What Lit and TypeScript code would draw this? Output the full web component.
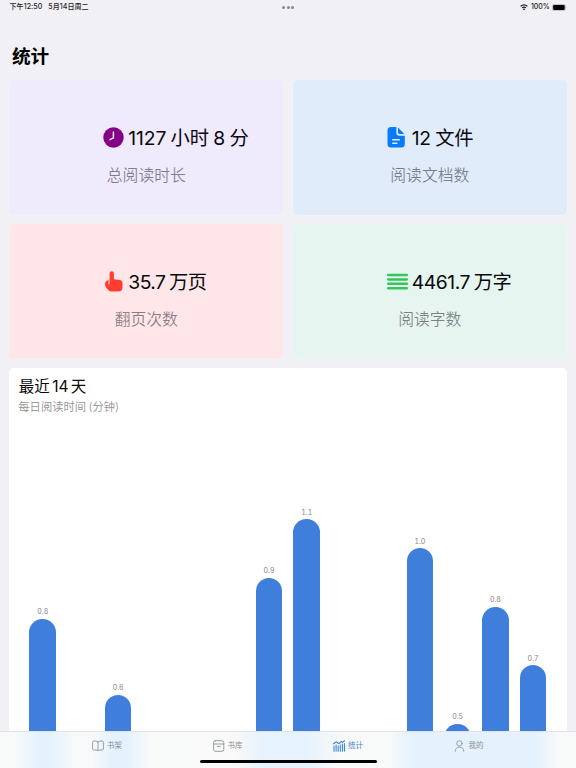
import { LitElement, html, css, svg } from "lit";
import { customElement, property } from "lit/decorators.js";

const icons = {
  clock: svg`<circle cx="10.5" cy="10.5" r="10.2" fill="#860087"/><path d="M10.4 4.9v6L7 12.7" fill="none" stroke="#f0eafc" stroke-width="1.5" stroke-linecap="round" stroke-linejoin="round"/>`,
  file: svg`<path d="M4 0H9.4V6Q9.4 8.8 12.2 8.8H17.8V17Q17.8 20.6 14.2 20.6H4Q.5 20.6 .5 17V3.6Q.5 0 4 0Z" fill="#087bfb"/><path d="M11 .4 17.3 6.9H12.6Q11 6.9 11 5.3Z" fill="#087bfb"/><path d="M5.7 12.7h6.6M5.7 16.3h4.2" stroke="#e1ecfb" stroke-width="1.4" stroke-linecap="round"/>`,
  finger: svg`<path transform="translate(1.4 0)" d="M5.2 2.3a2.15 2.15 0 0 1 4.3 0V8.2L15.7 9.1Q18.1 9.5 18.1 12V16Q18.1 20.6 13.5 20.6H7.5Q5.2 20.6 3.8 19L1.4 16Q.3 14.3.7 12.3 1 9.6 3.6 8.9L5.2 8.5Z" fill="#fe3c32"/><path d="M6 8.9v4.2" stroke="#ffe7e8" stroke-width="1" stroke-linecap="round"/>`,
  lines: svg`<path d="M1.2 4h18.6M1.2 8.4h18.6M1.2 12.8h18.6M1.2 17.2h18.6" stroke="#35c75b" stroke-width="2.5" stroke-linecap="round"/>`,
  book: svg`<path d="M6 2.1Q5.2 1 3.7 1H1.8Q.6 1 .6 2.2V8.9Q.6 10 1.8 10H4Q5.3 10 6 10.8 6.7 10 8 10h2.2q1.2 0 1.2-1.1V2.2Q11.4 1 10.2 1H8.3Q6.8 1 6 2.1ZM6 2.1v8.6"/>`,
  box: svg`<rect x=".6" y=".7" width="10.2" height="10.6" rx="1.8"/><path d="M.6 4h10.2M4.2 6.4h3"/>`,
  stats: svg`<path d="M1 11.2V6.1M3.1 11.2V5M5.2 11.2V6M7.3 11.2V5M9.4 11.2V4M11.4 11.2V3.6"/><path d="M.6 3.8 3.3 1.7 6 3.7 8.5 1.5 9.6 2.4 11.6.8"/>`,
  person: svg`<circle cx="5.5" cy="3.4" r="2.7"/><path d="M1.2 11.3C1.2 8.7 2.8 7.2 5.5 7.2s4.3 1.5 4.3 4.1"/>`,
};

const text = css`
  :host { font-family: Inter, "Noto Sans CJK SC", sans-serif; }
`;

@customElement("stat-card")
class StatCard extends LitElement {
  @property() icon = "clock";
  @property() label = "";
  static styles = [text, css`
    :host { display: flex; flex-direction: column; border-radius: 5px; box-shadow: 0 0 5px #ffffff40; }
    .value { display: flex; align-items: center; gap: 4px; height: 28px; margin: 43px 0 0 94px; }
    svg { width: 21px; height: 21px; flex: none; }
    .number { padding-top: 1.6px; font-size: 19.3px; line-height: 28px; white-space: nowrap; color: #08080c; font-weight: 370; letter-spacing: var(--tracking, -.3px); word-spacing: var(--word-gap, -.7px); }
    .label { margin-top: 13px; text-align: center; font-size: 15.8px; line-height: 24px; font-weight: 350; color: #12121c80; }
  `];
  render() {
    return html`
      <div class="value"><svg viewBox="0 0 21 21">${icons[this.icon as keyof typeof icons]}</svg><span class="number"><slot></slot></span></div>
      <div class="label">${this.label}</div>`;
  }
}

@customElement("day-chart")
class DayChart extends LitElement {
  static styles = [text, css`
    :host { display: flex; flex-direction: column; background: #fff; border-radius: 5px 5px 0 0; overflow: hidden; }
    .title { margin: 7px 0 0 9.5px; font-size: 15.5px; line-height: 23px; color: #0b0b0b; word-spacing: -2px; }
    .sub { margin: 1px 0 0 9px; font-size: 11.3px; line-height: 16px; color: #929292; font-weight: 350; white-space: pre; word-spacing: -.8px; }
    .bars { flex: 1; display: grid; grid-template-columns: repeat(14, 37.73px); margin-left: 14.6px; align-items: end; }
    .day { display: flex; flex-direction: column; align-items: center; }
    .num { font-size: 7px; line-height: 10px; height: 11.5px; color: #858585; font-feature-settings: "tnum"; }
    .clip { width: 27px; overflow: hidden; }
    .bar { width: 26.6px; height: 300px; margin: 0 auto; border-radius: 13.3px; background: #407edc; }
  `];
  render() {
    const days: [string, number][] = [
      ["0.8", 112], ["", 0], ["0.6", 36], ["", 0], ["", 0], ["", 0], ["0.9", 153],
      ["1.1", 211.5], ["", 0], ["", 0], ["1.0", 182.5], ["0.5", 7], ["0.8", 124], ["0.7", 65.5],
    ];
    return html`
      <div class="title">最近 14 天</div>
      <div class="sub">每日阅读时间 (分钟)</div>
      <div class="bars">${days.map(([n, h]) => html`<div class="day">${n ? html`
        <span class="num">${n}</span><div class="clip" style="height:${h}px"><div class="bar"></div></div>` : ""}</div>`)}</div>`;
  }
}

@customElement("app-root")
class AppRoot extends LitElement {
  static styles = [text, css`
    :host { display: flex; flex-direction: column; width: 576px; height: 768px; overflow: hidden; background: #f1f0f5; color: #000; }
    .status { display: flex; align-items: center; justify-content: space-between; height: 14px; padding: 0 9px 0 9.5px; font-size: 7px; line-height: 14px; font-weight: 500; color: #222; }
    .status > * { flex: 1; display: flex; align-items: center; }
    .when { gap: 6px; letter-spacing: .08px; }
    .dots { justify-content: center; gap: 1.6px; }
    .dots i { width: 3px; height: 3px; border-radius: 50%; background: #89898d; }
    .power { justify-content: flex-end; gap: 2.5px; letter-spacing: -.1px; }
    .wifi { width: 8px; height: 7px; }
    .battery { width: 15px; height: 7px; }
    h1 { margin: 28px 0 0 12px; height: 38px; font-size: 18.6px; line-height: 29px; font-weight: 600; }
    .cards { display: grid; grid-template: 134.5px 134.5px / 274px 274px; gap: 9.5px; padding: 0 9.3px; }
    .purple { background: #efeafc; --tracking: -.1px; --word-gap: -1px; }
    .blue { background: #e1ecfb; }
    .red { background: #ffe6e8; --tracking: -.55px; --word-gap: -1.3px; }
    .green { background: #e6f5f0; --tracking: -.45px; --word-gap: -1.3px; }
    day-chart { flex: 1; margin: 9.5px 9.3px 0; }
    .tabs { height: 36.4px; border-top: 1px solid #dfe4e8; display: flex; flex-direction: column; align-items: center;
      background: linear-gradient(90deg, #f8f9f9 15px, #eef6fb 27px, #e4f2fd 37px, #e4f2fd 50px, #f0f7fb 65px, #f8f9f9 75px, #f7f9fa 93px, #e4f2fd 112px, #e4f2fd 126px, #f8f9f9 150px, #f9f9f9 235px, #e6f2fd 264px, #e6f2fd 305px, #f8f9f9 341px, #f8f9f9 390px, #e5f2fd 412px, #e5f2fd 535px, #f8f9f9 558px); }
    .items { display: grid; grid-template-columns: repeat(4, 120.5px); height: 28.8px; margin-left: -.5px; }
    .tab { display: flex; align-items: center; justify-content: center; gap: 3px; font-size: 7.5px; line-height: 12px; color: #8b9095; }
    .tab svg { width: 12px; height: 12px; fill: none; stroke: currentColor; stroke-width: .85; stroke-linejoin: round; stroke-linecap: round; }
    .tab.active { color: #3d88d1; }
    .tab.active svg { stroke-width: 1.1; }
    .home { width: 177px; height: 3px; border-radius: 2px; background: #000; }
  `];
  render() {
    return html`
      <div class="status">
        <div class="when"><span>下午12:50</span><span>5月14日周二</span></div>
        <div class="dots"><i></i><i></i><i></i></div>
        <div class="power">
          <svg class="wifi" viewBox="0 0 8 7"><path d="M.6 2.3Q4-.5 7.4 2.3M2 3.9Q4 2.3 6 3.9" fill="none" stroke="#222" stroke-width="1.2"/><path d="M2.8 5 4 6.4 5.2 5Q4 4 2.8 5Z" fill="#222"/></svg>
          <span>100%</span>
          <svg class="battery" viewBox="0 0 15 7"><rect x=".4" y=".4" width="13" height="6.2" rx="1.8" fill="none" stroke="#9b9b9f" stroke-width=".6"/><rect x="1.1" y="1.1" width="11.6" height="4.8" rx="1.2"/><path d="M14.1 2.4v2.2q.8-1.1 0-2.2" fill="#89898d"/></svg>
        </div>
      </div>
      <h1>统计</h1>
      <div class="cards">
        <stat-card class="purple" icon="clock" label="总阅读时长">1127 小时 8 分</stat-card>
        <stat-card class="blue" icon="file" label="阅读文档数">12 文件</stat-card>
        <stat-card class="red" icon="finger" label="翻页次数">35.7 万页</stat-card>
        <stat-card class="green" icon="lines" label="阅读字数">4461.7 万字</stat-card>
      </div>
      <day-chart></day-chart>
      <div class="tabs">
        <div class="items">
          ${[["book", "书架"], ["box", "书库"], ["stats", "统计"], ["person", "我的"]].map(([icon, name]) => html`
            <div class="tab ${icon === "stats" ? "active" : ""}"><svg viewBox="0 0 12 12">${icons[icon as keyof typeof icons]}</svg><span>${name}</span></div>`)}
        </div>
        <div class="home"></div>
      </div>`;
  }
}
